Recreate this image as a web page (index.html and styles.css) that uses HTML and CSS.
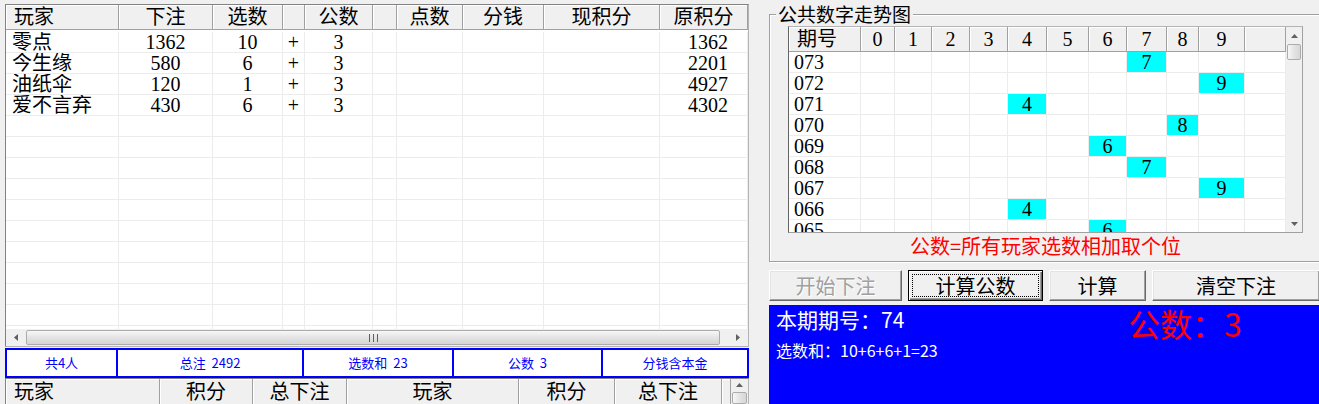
FILE: index.html
```html
<!DOCTYPE html>
<html lang="zh-CN">
<head>
<meta charset="utf-8">
<title>公共数字</title>
<link rel="stylesheet" href="styles.css">
</head>
<body>
<div class="app">
  <div class="left">
    <div class="grid">
      <div class="cols ghead">
        <div class="hc hl">玩家</div><div class="hc">下注</div><div class="hc">选数</div><div class="hc"></div><div class="hc">公数</div><div class="hc"></div><div class="hc">点数</div><div class="hc">分钱</div><div class="hc">现积分</div><div class="hc">原积分</div>
      </div>
      <div class="gbody">
        <div class="cols row"><span class="name">零点</span><span>1362</span><span>10</span><span>+</span><span>3</span><span></span><span></span><span></span><span></span><span class="rt">1362</span></div>
        <div class="cols row"><span class="name">今生缘</span><span>580</span><span>6</span><span>+</span><span>3</span><span></span><span></span><span></span><span></span><span class="rt">2201</span></div>
        <div class="cols row"><span class="name">油纸伞</span><span>120</span><span>1</span><span>+</span><span>3</span><span></span><span></span><span></span><span></span><span class="rt">4927</span></div>
        <div class="cols row"><span class="name">爱不言弃</span><span>430</span><span>6</span><span>+</span><span>3</span><span></span><span></span><span></span><span></span><span class="rt">4302</span></div>
        <div class="cols row"><span></span><span></span><span></span><span></span><span></span><span></span><span></span><span></span><span></span><span></span></div>
        <div class="cols row"><span></span><span></span><span></span><span></span><span></span><span></span><span></span><span></span><span></span><span></span></div>
        <div class="cols row"><span></span><span></span><span></span><span></span><span></span><span></span><span></span><span></span><span></span><span></span></div>
        <div class="cols row"><span></span><span></span><span></span><span></span><span></span><span></span><span></span><span></span><span></span><span></span></div>
        <div class="cols row"><span></span><span></span><span></span><span></span><span></span><span></span><span></span><span></span><span></span><span></span></div>
        <div class="cols row"><span></span><span></span><span></span><span></span><span></span><span></span><span></span><span></span><span></span><span></span></div>
        <div class="cols row"><span></span><span></span><span></span><span></span><span></span><span></span><span></span><span></span><span></span><span></span></div>
        <div class="cols row"><span></span><span></span><span></span><span></span><span></span><span></span><span></span><span></span><span></span><span></span></div>
        <div class="cols row"><span></span><span></span><span></span><span></span><span></span><span></span><span></span><span></span><span></span><span></span></div>
        <div class="cols row"><span></span><span></span><span></span><span></span><span></span><span></span><span></span><span></span><span></span><span></span></div>
        <div class="cols row"><span></span><span></span><span></span><span></span><span></span><span></span><span></span><span></span><span></span><span></span></div>
      </div>
      <div class="hscroll">
        <div class="sbtn"><svg width="4" height="7" viewBox="0 0 4 7"><polygon points="4,0 0,3.5 4,7" fill="#606060"/></svg></div>
        <div class="thumb"><svg width="9" height="8" viewBox="0 0 9 8"><rect x="0" y="0" width="1" height="8" fill="#606060"/><rect x="4" y="0" width="1" height="8" fill="#606060"/><rect x="8" y="0" width="1" height="8" fill="#606060"/></svg></div>
        <div class="sbtn"><svg width="4" height="7" viewBox="0 0 4 7"><polygon points="0,0 4,3.5 0,7" fill="#606060"/></svg></div>
      </div>
    </div>
    <div class="status">
      <div>共4人</div><div>总注  2492</div><div>选数和  23</div><div>公数  3</div><div>分钱含本金</div>
    </div>
    <div class="btable">
      <div class="bhead">
        <div class="hc tall hl">玩家</div><div class="hc tall">积分</div><div class="hc tall">总下注</div><div class="hc tall">玩家</div><div class="hc tall">积分</div><div class="hc tall">总下注</div><div class="hc tall"></div>
      </div>
      <div class="bscroll">
        <div class="vbtn"><svg width="7" height="4" viewBox="0 0 7 4"><polygon points="0,4 3.5,0 7,4" fill="#606060"/></svg></div>
        <div class="vthumb"></div>
      </div>
    </div>
  </div>

  <div class="right">
    <fieldset class="group">
      <legend>公共数字走势图</legend>
      <div class="trend">
        <div class="tmain">
          <div class="tcols thead">
            <div class="hc hl">期号</div><div class="hc">0</div><div class="hc">1</div><div class="hc">2</div><div class="hc">3</div><div class="hc">4</div><div class="hc">5</div><div class="hc">6</div><div class="hc">7</div><div class="hc">8</div><div class="hc">9</div><div class="hc"></div>
          </div>
          <div class="tbody">
            <div class="tcols trow"><span class="pn">073</span><span></span><span></span><span></span><span></span><span></span><span></span><span></span><span class="on">7</span><span></span><span></span><span></span></div>
            <div class="tcols trow"><span class="pn">072</span><span></span><span></span><span></span><span></span><span></span><span></span><span></span><span></span><span></span><span class="on">9</span><span></span></div>
            <div class="tcols trow"><span class="pn">071</span><span></span><span></span><span></span><span></span><span class="on">4</span><span></span><span></span><span></span><span></span><span></span><span></span></div>
            <div class="tcols trow"><span class="pn">070</span><span></span><span></span><span></span><span></span><span></span><span></span><span></span><span></span><span class="on">8</span><span></span><span></span></div>
            <div class="tcols trow"><span class="pn">069</span><span></span><span></span><span></span><span></span><span></span><span></span><span class="on">6</span><span></span><span></span><span></span><span></span></div>
            <div class="tcols trow"><span class="pn">068</span><span></span><span></span><span></span><span></span><span></span><span></span><span></span><span class="on">7</span><span></span><span></span><span></span></div>
            <div class="tcols trow"><span class="pn">067</span><span></span><span></span><span></span><span></span><span></span><span></span><span></span><span></span><span></span><span class="on">9</span><span></span></div>
            <div class="tcols trow"><span class="pn">066</span><span></span><span></span><span></span><span></span><span class="on">4</span><span></span><span></span><span></span><span></span><span></span><span></span></div>
            <div class="tcols trow"><span class="pn">065</span><span></span><span></span><span></span><span></span><span></span><span></span><span class="on">6</span><span></span><span></span><span></span><span></span></div>
          </div>
        </div>
        <div class="vscroll">
          <div class="vbtn"><svg width="7" height="4" viewBox="0 0 7 4"><polygon points="0,4 3.5,0 7,4" fill="#606060"/></svg></div>
          <div class="vthumb"></div>
          <div class="vfill"></div>
          <div class="vbtn"><svg width="7" height="4" viewBox="0 0 7 4"><polygon points="0,0 3.5,4 7,0" fill="#606060"/></svg></div>
        </div>
      </div>
      <div class="caption">公数=所有玩家选数相加取个位</div>
    </fieldset>

    <div class="btns">
      <button class="btn off w1">开始下注</button>
      <button class="btn def w2">计算公数</button>
      <button class="btn w3">计算</button>
      <button class="btn w4">清空下注</button>
    </div>

    <div class="panel">
      <div class="ptop">
        <div class="pid">本期期号：74</div>
        <div class="pnum">公数：3</div>
      </div>
      <div class="psum">选数和：10+6+6+1=23</div>
    </div>
  </div>
</div>
</body>
</html>
```

FILE: styles.css
```css
* { box-sizing: border-box; }
html, body { margin: 0; height: 100%; overflow: hidden; }
body {
  background: #f0f0f0;
  font-family: "Liberation Serif", "Noto Sans CJK SC", serif;
  color: #000;
}
.app {
  display: flex;
  gap: 20px;
  padding: 4px 0 0 5px;
  height: 404px;
}

/* ---------- left side ---------- */
.left {
  flex: 0 0 744px;
  display: flex;
  flex-direction: column;
}
.grid {
  border: 1px solid #b4b4b4;
  border-top-color: #828282;
  border-left-color: #828282;
  background: #fff;
}
.cols {
  display: grid;
  grid-template-columns: 113px 94px 70px 22px 68px 24px 66px 81px 116px 88px;
}
.hc {
  height: 25px;
  background: #f0f0f0;
  border-right: 1px solid #a0a0a0;
  border-bottom: 1px solid #a0a0a0;
  box-shadow: inset 1px 1px 0 #fff;
  font-size: 20px;
  line-height: 24px;
  text-align: center;
  white-space: nowrap;
  overflow: hidden;
}
.hc.hl { text-align: left; padding-left: 8px; }
.hc.tall { height: 27px; line-height: 26px; }

.gbody {
  height: 299px;
  overflow: hidden;
  padding-top: 2px;
}
.row > span,
.trow > span {
  height: 21px;
  border-right: 1px solid #ececec;
  border-bottom: 1px solid #ececec;
  font-size: 20px;
  line-height: 20px;
  text-align: center;
  white-space: nowrap;
  overflow: hidden;
  background-clip: padding-box;
}
.row > span.name { text-align: left; padding-left: 6px; }
.row > span.rt { text-align: right; padding-right: 19px; }

.hscroll {
  display: flex;
  align-items: center;
  height: 17px;
  background: #f0f0f0;
}
.sbtn {
  width: 20px;
  height: 17px;
  display: flex;
  align-items: center;
  justify-content: center;
}
.thumb {
  flex: 1;
  height: 15px;
  margin-right: 8px;
  border: 1px solid #acacac;
  border-radius: 2px;
  background: linear-gradient(#f7f7f7, #e4e4e4 50%, #d6d6d6);
  display: flex;
  align-items: center;
  justify-content: center;
}

.status {
  margin-top: 1px;
  height: 30px;
  border: 2px solid #0000ff;
  background: #fff;
  display: grid;
  grid-template-columns: 109px 186px 150px 149px 1fr;
  font-family: "Noto Sans CJK SC", sans-serif;
  font-size: 13px;
  color: #0000ff;
}
.status > div {
  text-align: center;
  line-height: 26px;
  white-space: pre;
}
.status > div + div { border-left: 2px solid #0000ff; }

.btable {
  flex: 1;
  display: flex;
  border-top: 1px solid #828282;
  border-left: 1px solid #828282;
  border-right: 1px solid #b4b4b4;
  background: #fff;
  overflow: hidden;
}
.bhead {
  width: 725px;
  display: grid;
  grid-template-columns: 154px 93px 94px 172px 96px 107px 9px;
  align-self: flex-start;
}
.bscroll {
  width: 17px;
  background: #f0f0f0;
  display: flex;
  flex-direction: column;
}

/* ---------- right side ---------- */
.right {
  flex: 0 0 560px;
  display: flex;
  flex-direction: column;
}
.group {
  margin: 0;
  min-width: 0;
  padding: 2px 0 3px 6px;
  border: 1px solid #a0a0a0;
  box-shadow: inset 1px 1px 0 #fff, 1px 1px 0 #fff;
}
.group legend {
  padding: 0 2px;
  font-family: "Noto Sans CJK SC", sans-serif;
  font-size: 19px;
  line-height: 20px;
  background: #f0f0f0;
}
.trend {
  display: flex;
  width: 515px;
  height: 207px;
  margin-left: 12px;
  border: 1px solid #a0a0a0;
  border-left-color: #646464;
  border-top-color: #b4b4b4;
  background: #fff;
}
.tmain { width: 497px; }
.tcols {
  display: grid;
  grid-template-columns: 72px 34px 37px 38px 38px 39px 42px 38px 40px 32px 46px 41px;
}
.tbody { height: 180px; overflow: hidden; }
.trow > span.pn { text-align: left; padding-left: 5px; }
.trow > span.on { background-color: #00ffff; }

.vscroll {
  width: 16px;
  background: #f0f0f0;
  display: flex;
  flex-direction: column;
}
.vbtn {
  height: 17px;
  display: flex;
  align-items: center;
  justify-content: center;
}
.vthumb {
  height: 16px;
  margin: 0 1px;
  border: 1px solid #acacac;
  border-radius: 2px;
  background: linear-gradient(90deg, #f7f7f7, #e4e4e4 50%, #d6d6d6);
}
.vfill { flex: 1; }

.caption {
  width: 515px;
  margin: 1px 0 0 12px;
  text-align: center;
  color: #ff0000;
  font-family: "Noto Sans CJK SC", sans-serif;
  font-size: 20px;
  line-height: 24px;
}

.btns {
  display: flex;
  gap: 6px;
  margin-top: 8px;
  height: 31px;
}
.btn {
  flex: 0 0 auto;
  height: 31px;
  padding: 0;
  margin: 0;
  background: #f0f0f0;
  border: 1px solid;
  border-color: #fff #696969 #696969 #fff;
  box-shadow: inset -1px -1px 0 #a0a0a0, inset 1px 1px 0 #e3e3e3;
  font-family: "Noto Sans CJK SC", sans-serif;
  font-size: 20px;
  line-height: 28px;
  color: #000;
  text-align: center;
}
.btn.w1 { width: 133px; }
.btn.w2 { width: 135px; }
.btn.w3 { width: 97px; }
.btn.w4 { width: 168px; }
.btn.off { color: #a0a0a0; text-shadow: 1px 1px 0 #fff; }
.btn.def {
  border-color: #000;
  box-shadow: inset 1px 1px 0 #fff, inset -1px -1px 0 #696969, inset -2px -2px 0 #a0a0a0;
  outline: 1px dotted #000;
  outline-offset: -5px;
}

.panel {
  flex: 1;
  margin-top: 4px;
  background: #0000ff;
  color: #fff;
  font-family: "Noto Sans CJK SC", sans-serif;
  padding: 2px 0 0 7px;
}
.ptop {
  display: grid;
  grid-template-columns: 352px auto;
  align-items: start;
}
.pid { font-size: 21px; line-height: 24px; }
.pnum { color: #ff0000; font-size: 32px; line-height: 32px; }
.psum { font-size: 16px; line-height: 20px; margin-top: 1px; }
```
